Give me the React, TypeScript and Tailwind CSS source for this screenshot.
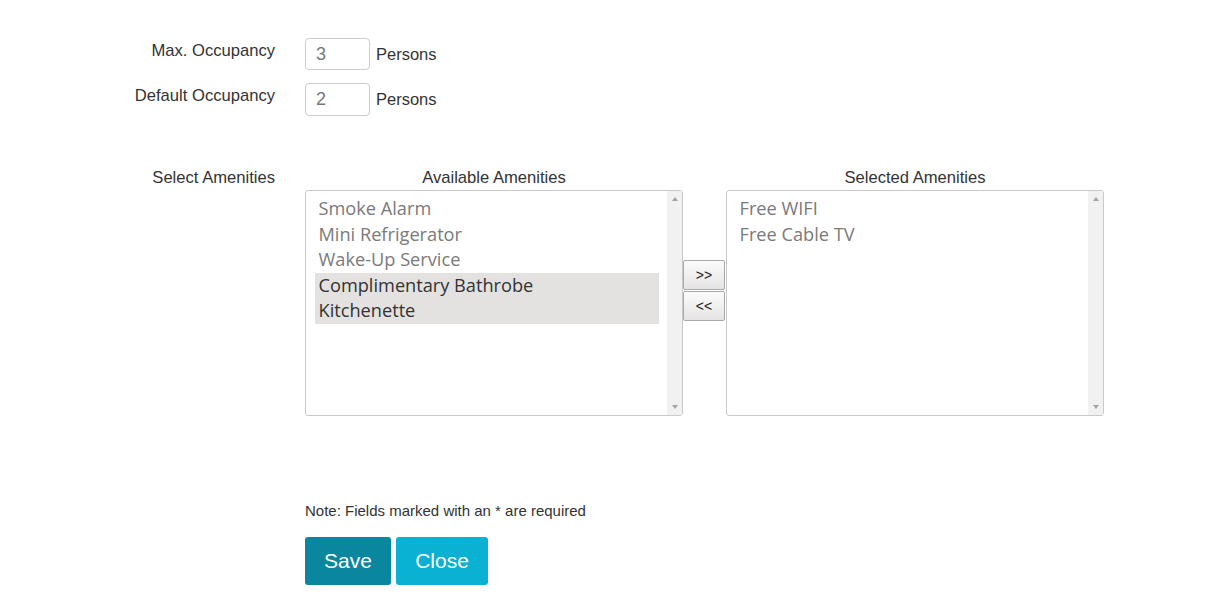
import React from "react";

const labelFont = { fontFamily: '"Liberation Sans", Arial, sans-serif' };

function ListBox({ items, selected = [] as string[] }: { items: string[]; selected?: string[] }) {
  return (
    <div className="flex h-[226px] w-[378px] rounded-[3px] border border-[#c9c9c9] bg-white">
      <div className="flex-1 pl-[9px] pr-[8px] pt-[5px]" style={{ fontFamily: '"Open Sans", "Noto Sans", sans-serif' }}>
        {items.map((it) => {
          const sel = selected.includes(it);
          return (
            <div
              key={it}
              className={
                "h-[25.5px] pl-[3.5px] text-[18.2px] leading-[25.5px] whitespace-nowrap " +
                (sel ? "bg-[#e3e2e0] text-[#333333]" : "text-[#7a7a7a]")
              }
            >
              {it}
            </div>
          );
        })}
      </div>
      <div className="flex w-[15px] flex-col items-center justify-between bg-[#f1f1f1] py-[6px]">
        <div className="h-0 w-0 border-x-[3.5px] border-b-[4px] border-x-transparent border-b-[#a3a3a3]" />
        <div className="h-0 w-0 border-x-[3.5px] border-t-[4px] border-x-transparent border-t-[#a3a3a3]" />
      </div>
    </div>
  );
}

function ArrowBtn({ children }: { children: React.ReactNode }) {
  return (
    <button
      className="flex h-[30px] w-[42px] items-center justify-center rounded-[2px] border border-[#a9a9a9] bg-gradient-to-b from-[#fbfbfb] to-[#e4e4e4] text-[14px] text-[#222]"
      style={labelFont}
    >
      {children}
    </button>
  );
}

export default function App() {
  return (
    <div className="min-h-[602px] w-[1226px] bg-white text-[#333333]" style={labelFont}>
      <div className="pt-[38px]">
        {/* Max occupancy */}
        <div className="flex items-start">
          <div className="w-[275px] pt-[3px] text-right text-[16.6px] leading-[20px]">Max. Occupancy</div>
          <div className="ml-[30px] flex items-center">
            <div className="flex h-[32px] w-[65px] items-center rounded-[4px] border border-[#cccccc] pl-[10px] text-[18px] text-[#777777]">
              3
            </div>
            <span className="ml-[6px] text-[16.5px]">Persons</span>
          </div>
        </div>
        {/* Default occupancy */}
        <div className="mt-[13px] flex items-start">
          <div className="w-[275px] pt-[3px] text-right text-[16.6px] leading-[20px]">Default Occupancy</div>
          <div className="ml-[30px] flex items-center">
            <div className="flex h-[33px] w-[65px] items-center rounded-[4px] border border-[#cccccc] pl-[10px] text-[18px] text-[#777777]">
              2
            </div>
            <span className="ml-[6px] text-[16.5px]">Persons</span>
          </div>
        </div>

        {/* Amenities */}
        <div className="mt-[51px] flex items-start">
          <div className="w-[275px] pt-[1px] text-right text-[16.6px] leading-[20px]">Select Amenities</div>
          <div className="ml-[30px] flex items-start">
            <div className="flex flex-col">
              <div className="pt-[1px] text-center text-[16.6px] leading-[20px]">Available Amenities</div>
              <div className="mt-[2px]">
                <ListBox
                  items={["Smoke Alarm", "Mini Refrigerator", "Wake-Up Service", "Complimentary Bathrobe", "Kitchenette"]}
                  selected={["Complimentary Bathrobe", "Kitchenette"]}
                />
              </div>
            </div>
            <div className="flex w-[43px] flex-col items-start gap-[1px] pt-[93px]">
              <ArrowBtn>&gt;&gt;</ArrowBtn>
              <ArrowBtn>&lt;&lt;</ArrowBtn>
            </div>
            <div className="flex flex-col">
              <div className="pt-[1px] text-center text-[16.6px] leading-[20px]">Selected Amenities</div>
              <div className="mt-[2px]">
                <ListBox items={["Free WIFI", "Free Cable TV"]} />
              </div>
            </div>
          </div>
        </div>

        {/* Note */}
        <div className="ml-[305px] mt-[85px] text-[15px] leading-[20px]">Note: Fields marked with an * are required</div>
        <div className="ml-[305px] mt-[16px] flex gap-[5px]">
          <button className="h-[48px] w-[86px] rounded-[3px] bg-[#0a879f] text-[21px] text-white">Save</button>
          <button className="h-[48px] w-[92px] rounded-[3px] bg-[#0bb1d3] text-[21px] text-white">Close</button>
        </div>
      </div>
    </div>
  );
}
